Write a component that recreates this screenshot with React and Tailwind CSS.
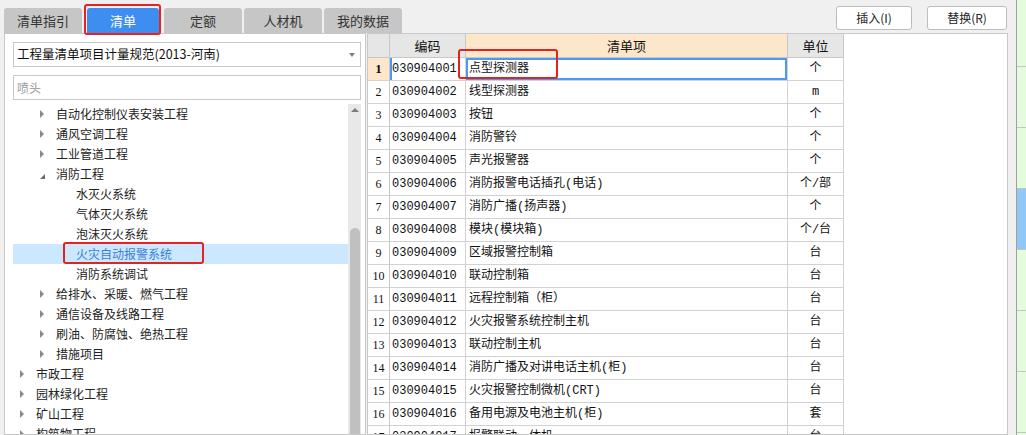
import React from "react";

const tabs = ["清单指引", "清单", "定额", "人材机", "我的数据"];

const tree = [
  { l: 2, t: "自动化控制仪表安装工程", a: "c" },
  { l: 2, t: "通风空调工程", a: "c" },
  { l: 2, t: "工业管道工程", a: "c" },
  { l: 2, t: "消防工程", a: "e" },
  { l: 3, t: "水灭火系统" },
  { l: 3, t: "气体灭火系统" },
  { l: 3, t: "泡沫灭火系统" },
  { l: 3, t: "火灾自动报警系统", sel: true },
  { l: 3, t: "消防系统调试" },
  { l: 2, t: "给排水、采暖、燃气工程", a: "c" },
  { l: 2, t: "通信设备及线路工程", a: "c" },
  { l: 2, t: "刷油、防腐蚀、绝热工程", a: "c" },
  { l: 2, t: "措施项目", a: "c" },
  { l: 1, t: "市政工程", a: "c" },
  { l: 1, t: "园林绿化工程", a: "c" },
  { l: 1, t: "矿山工程", a: "c" },
  { l: 1, t: "构筑物工程", a: "c" },
];

const rows = [
  ["030904001", "点型探测器", "个"],
  ["030904002", "线型探测器", "m"],
  ["030904003", "按钮", "个"],
  ["030904004", "消防警铃", "个"],
  ["030904005", "声光报警器", "个"],
  ["030904006", "消防报警电话插孔(电话)", "个/部"],
  ["030904007", "消防广播(扬声器)", "个"],
  ["030904008", "模块(模块箱)", "个/台"],
  ["030904009", "区域报警控制箱", "台"],
  ["030904010", "联动控制箱", "台"],
  ["030904011", "远程控制箱（柜）", "台"],
  ["030904012", "火灾报警系统控制主机", "台"],
  ["030904013", "联动控制主机", "台"],
  ["030904014", "消防广播及对讲电话主机(柜)", "台"],
  ["030904015", "火灾报警控制微机(CRT)", "台"],
  ["030904016", "备用电源及电池主机(柜)", "套"],
  ["030904017", "报警联动一体机", "台"],
];

const pad = { 1: "pl-[7px]", 2: "pl-[27px]", 3: "pl-[47px]" };

function Arrow({ type }) {
  if (type === "c")
    return <span className="w-0 h-0 border-y-[4px] border-y-transparent border-l-[4px] border-l-[#8a8a8a]" />;
  if (type === "e")
    return <span className="w-0 h-0 mt-[4px] border-b-[5px] border-b-[#6b6b6b] border-l-[5px] border-l-transparent" />;
  return null;
}

function TreeRow({ item }) {
  return (
    <div className={`relative flex items-center h-[20px] ${pad[item.l]} ${item.sel ? "bg-[#cce8ff] text-[#3b7ed6]" : "text-[#222]"}`}>
      <span className="w-[16px] flex items-center">
        <Arrow type={item.a} />
      </span>
      <span className="whitespace-nowrap">{item.t}</span>
      {item.sel && (
        <span className="absolute left-[50px] top-[-2px] w-[141px] h-[22px] border-2 border-[#e32222] rounded-[3px]" />
      )}
    </div>
  );
}

export default function App() {
  return (
    <div className="w-[1026px] h-[435px] overflow-hidden bg-[#f0f0f0] flex font-['Noto_Sans_CJK_SC',sans-serif]">
      <div className="flex-1 flex flex-col min-w-0">
        {/* top bar */}
        <div className="h-[33px] flex shrink-0">
          <div className="flex items-end gap-[2px] pl-[4px]">
            {tabs.map((t, i) => (
              <div
                key={t}
                className={`relative h-[25px] flex items-center justify-center text-[13px] rounded-t-[3px] ${
                  i === 1 ? "w-[72px] mx-[3px] bg-[#3d8ef0] text-white" : "w-[78px] bg-[#c6c6c6] text-[#333]"
                }`}
              >
                {t}
                {i === 1 && (
                  <span className="absolute left-[-3px] top-[-4px] w-[77px] h-[31px] border-2 border-[#e82121] rounded-[3px]" />
                )}
              </div>
            ))}
          </div>
          <div className="ml-auto mr-[9px] mt-[6px] flex gap-[15px] text-[12px] text-[#222]">
            <button className="w-[76px] h-[24px] bg-white border border-[#bcbcbc] rounded-[3px]">插入(I)</button>
            <button className="w-[80px] h-[24px] bg-white border border-[#bcbcbc] rounded-[3px]">替换(R)</button>
          </div>
        </div>

        {/* body */}
        <div className="flex-1 flex min-h-0">
          {/* left panel */}
          <div className="ml-[4px] w-[362px] bg-white border border-[#c8c8c8] flex flex-col overflow-hidden">
            <div className="ml-[8px] mt-[8px] w-[348px] h-[25px] border border-[#c8c8c8] flex items-center pl-[3px] text-[12.5px] text-[#111] shrink-0">
              <span className="flex-1 whitespace-nowrap">工程量清单项目计量规范(2013-河南)</span>
              <span className="mr-[5px] w-0 h-0 border-x-[3px] border-x-transparent border-t-[4px] border-t-[#808080]" />
            </div>
            <div className="ml-[8px] mt-[8px] w-[348px] h-[25px] border border-[#c8c8c8] flex items-center pl-[3px] text-[12px] text-[#9a9a9a] shrink-0">
              喷头
            </div>
            <div className="ml-[8px] mt-[4px] flex flex-1 min-h-0">
              <div className="w-[335px] text-[12px] leading-[20px]">
                {tree.map((item) => (
                  <TreeRow key={item.t} item={item} />
                ))}
              </div>
              <div className="w-[13px] bg-[#e8e8e8] flex flex-col items-center">
                <span className="mt-[4px] w-0 h-0 border-x-[4px] border-x-transparent border-b-[4px] border-b-[#7a7a7a]" />
                <div className="mt-[116px] w-[10px] flex-1 bg-[#c0c0c0] rounded-t-full" />
              </div>
            </div>
          </div>

          {/* table */}
          <div className="relative ml-[1px] w-[641px] bg-white border border-[#c8c8c8] overflow-hidden font-['Liberation_Mono','Noto_Sans_CJK_SC',monospace] text-[12px] text-[#111]">
            <div className="flex h-[24px] border-b border-[#c8c8c8] w-[476px] font-['Noto_Sans_CJK_SC',sans-serif] text-[13px]">
              <div className="w-[22px] bg-[#e6e6e6] border-r border-[#c8c8c8]" />
              <div className="w-[76px] bg-[#e6e6e6] border-r border-[#c8c8c8] flex items-center justify-center">编码</div>
              <div className="w-[322px] bg-[#fde7cb] border-r border-[#c8c8c8] flex items-center justify-center">清单项</div>
              <div className="w-[56px] bg-[#e6e6e6] border-r border-[#c8c8c8] flex items-center justify-center">单位</div>
            </div>
            {rows.map((r, i) => (
              <div key={r[0]} className="flex h-[23px] border-b border-[#d2d2d2] w-[476px]">
                <div
                  className={`w-[22px] border-r border-[#c8c8c8] flex items-center justify-center font-['Liberation_Serif',serif] ${
                    i === 0 ? "bg-[#fde6cc] font-bold text-[13px]" : "text-[12px]"
                  }`}
                >
                  {i + 1}
                </div>
                <div className={`w-[76px] border-r border-[#d2d2d2] flex items-center pl-[2px] ${i === 0 ? "shadow-[inset_2px_0_0_#4a9af5]" : ""}`}>
                  {r[0]}
                </div>
                <div className={`w-[322px] border-r border-[#d2d2d2] flex items-center pl-[3px] whitespace-nowrap ${i === 0 ? "shadow-[inset_0_0_0_2px_#4a9af5]" : ""}`}>
                  {r[1]}
                </div>
                <div className="w-[56px] border-r border-[#d2d2d2] flex items-center justify-center">{r[2]}</div>
              </div>
            ))}
            <span className="absolute left-[90px] top-[15px] w-[100px] h-[30px] border-2 border-[#e32222] rounded-[3px]" />
          </div>
        </div>
      </div>

      {/* right strip */}
      <div className="w-[10px] border-l border-[#a0a0a0] bg-[#e4fcdc] flex flex-col">
        <div className="h-[67px] border-b border-[#c4c4c4]" />
        <div className="h-[61px] border-b border-[#c4c4c4]" />
        <div className="h-[61px] border-b border-[#c4c4c4]" />
        <div className="h-[61px] border-b border-[#c4c4c4] bg-[#90c8f8]" />
        <div className="h-[61px] border-b border-[#c4c4c4]" />
        <div className="h-[61px] border-b border-[#c4c4c4]" />
        <div className="h-[61px] border-b border-[#c4c4c4]" />
      </div>
    </div>
  );
}
